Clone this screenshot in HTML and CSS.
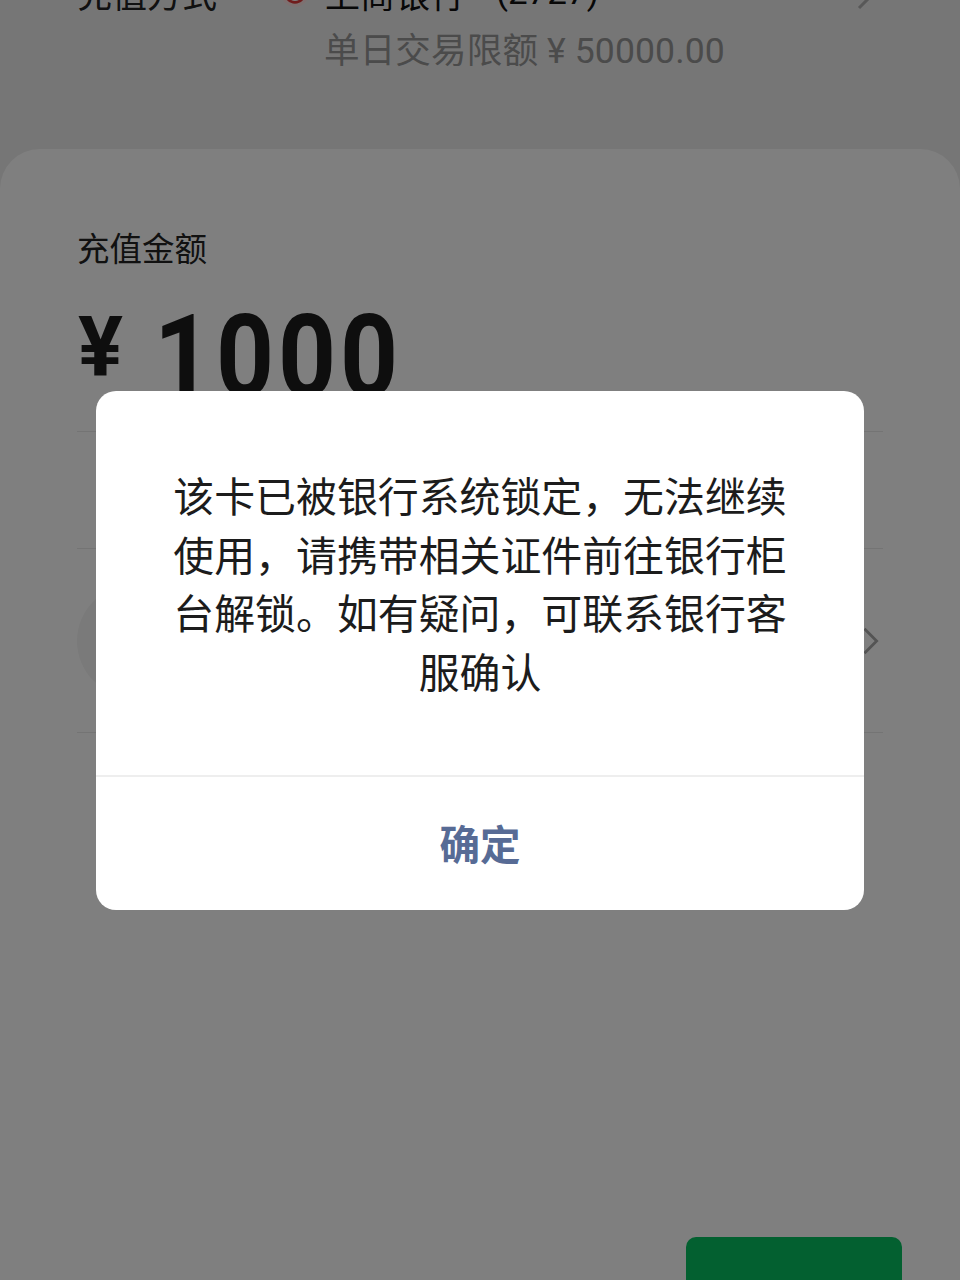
FILE: index.html
```html
<!DOCTYPE html>
<html lang="zh-CN">
<head>
<meta charset="utf-8">
<title>充值</title>
<link rel="stylesheet" href="styles.css">
</head>
<body>
<div class="page">
  <header class="method">
    <div class="method-label">充值方式</div>
    <div class="method-body">
      <div class="bank-row">
        <svg class="bank-icon" viewBox="0 0 32 32"><circle cx="16" cy="16" r="15" fill="#fbe3e3"/><circle cx="16" cy="16" r="10" fill="#fff" stroke="#e03a3a" stroke-width="3"/></svg>
        <span class="bank-name">上商银行</span>
        <span class="bank-tail">(2727)</span>
      </div>
      <div class="limit">单日交易限额 ¥ 50000.00</div>
    </div>
    <svg class="chev-top" viewBox="0 0 20 32"><path d="M3 3 L16 16 L3 29" fill="none" stroke="#b0b0b0" stroke-width="3"/></svg>
  </header>
  <main class="sheet">
    <div class="amount-label">充值金额</div>
    <div class="amount"><span class="yen">¥</span><span class="num">1000</span></div>
    <div class="rule"></div>
    <div class="row-empty"></div>
    <div class="rule"></div>
    <div class="row-pick">
      <div class="avatar"></div>
      <svg class="chev" viewBox="0 0 20 32"><path d="M3 3 L16 16 L3 29" fill="none" stroke="#a8a8a8" stroke-width="3"/></svg>
    </div>
    <div class="rule"></div>
    <div class="footer"><div class="pay"></div></div>
  </main>
</div>
<div class="mask"></div>
<div class="dialog">
  <p class="dialog-text">该卡已被银行系统锁定，无法继续使用，请携带相关证件前往银行柜台解锁。如有疑问，可联系银行客服确认</p>
  <div class="dialog-action">确定</div>
</div>
</body>
</html>
```
FILE: styles.css
```css
* { box-sizing: border-box; }
html, body {
  margin: 0;
  height: 1280px;
  overflow: hidden;
}
body {
  font-family: "Noto Sans CJK SC", "Liberation Sans", sans-serif;
  color: #1a1a1a;
  background: #ededed;
}
.page {
  height: 1280px;
  display: flex;
  flex-direction: column;
  overflow: hidden;
}
.method {
  display: flex;
  align-items: flex-start;
  height: 149px;
  padding: 0 84px 0 77px;
  flex: none;
}
.method-label {
  width: 247px;
  font-size: 35px;
  line-height: 40px;
  margin-top: -27px;
  color: #222;
}
.method-body { flex: 1; margin-top: -27px; }
.bank-row {
  display: flex;
  align-items: center;
  height: 40px;
  margin-left: -44px;
  gap: 15px;
  white-space: nowrap;
}
.bank-icon { width: 30px; height: 30px; flex: none; }
.bank-name {
  font-size: 35px;
  line-height: 40px;
  color: #111;
}
.bank-tail {
  font-family: "Roboto", sans-serif;
  font-size: 35px;
  line-height: 40px;
  margin-left: 16px;
  color: #111;
}
.limit {
  margin-top: 15px;
  font-family: "Roboto", "Noto Sans CJK SC", sans-serif;
  font-size: 35.6px;
  letter-spacing: 0.1px;
  line-height: 46px;
  color: #969696;
  white-space: nowrap;
}
.chev-top { width: 20px; height: 32px; margin-top: -21px; }
.sheet {
  flex: 1;
  background: #fff;
  border-radius: 40px 40px 0 0;
  padding: 79px 77px 0;
  display: flex;
  flex-direction: column;
}
.amount-label {
  font-size: 32.5px;
  line-height: 38px;
  color: #222;
}
.amount {
  display: flex;
  align-items: baseline;
  height: 165px;
  padding-top: 33px;
  line-height: 116px;
  color: #1c1c1c;
  font-family: "Roboto", sans-serif;
}
.yen {
  font-family: "Roboto", sans-serif;
  font-weight: 700;
  font-size: 84px;
  width: 76px;
  margin-left: 1px;
  position: relative;
  top: -20px;
}
.num {
  font-size: 115px;
  font-weight: 700;
  letter-spacing: 4.5px;
  transform: scaleX(0.88);
  transform-origin: left center;
}
.rule { height: 1px; background: #e8e8e8; flex: none; }
.row-empty { height: 116px; flex: none; }
.row-pick {
  height: 183px;
  flex: none;
  display: flex;
  align-items: center;
  justify-content: space-between;
}
.avatar {
  width: 112px;
  height: 112px;
  border-radius: 50%;
  background: #f4f4f4;
}
.chev { width: 20px; height: 30px; margin-right: 2px; flex: none; }
.footer {
  flex: 1;
  display: flex;
  justify-content: flex-end;
  align-items: flex-end;
  margin-right: -19px;
}
.pay {
  width: 216px;
  height: 43px;
  background: #07c160;
  border-radius: 10px 10px 0 0;
}
.mask {
  position: fixed;
  inset: 0;
  background: rgba(0, 0, 0, 0.5);
}
.dialog {
  position: fixed;
  left: 96px;
  top: 391px;
  width: 768px;
  height: 519px;
  background: #fff;
  border-radius: 20px;
  display: flex;
  flex-direction: column;
}
.dialog-text {
  flex: none;
  height: 386px;
  margin: 0;
  padding: 75px 76px 0;
  font-size: 40.9px;
  line-height: 58.7px;
  text-align: center;
  color: #1c1c1c;
  border-bottom: 2px solid #eeeeee;
}
.dialog-action {
  flex: 1;
  display: flex;
  align-items: center;
  justify-content: center;
  padding-bottom: 3px;
  font-size: 40.5px;
  font-weight: 700;
  color: #576b95;
}
```
